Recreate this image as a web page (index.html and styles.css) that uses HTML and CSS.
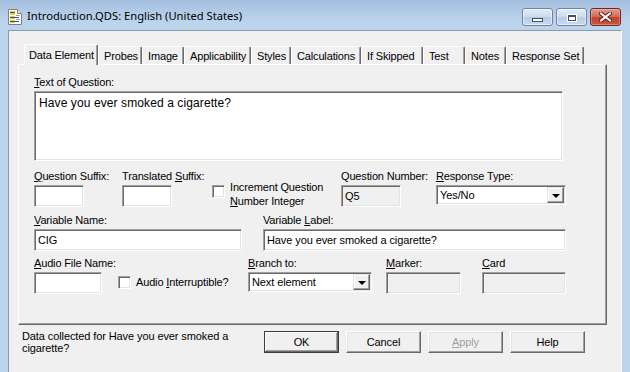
FILE: index.html
```html
<!DOCTYPE html>
<html lang="en">
<head>
    <meta charset="UTF-8">
    <title>Introduction.QDS: English (United States)</title>
    <link rel="stylesheet" href="styles.css">
</head>
<body>
    <div class="titlebar">
        <svg class="app-icon" width="14" height="16" viewBox="0 0 14 16">
            <path d="M0.5 0.5h9l4 4v11h-13z" fill="#fff" stroke="#808080"/>
            <path d="M9.5 0.5v4h4" fill="#e8e8e8" stroke="#808080"/>
            <rect x="2" y="2" width="5" height="4" fill="#f2cf1c"/>
            <rect x="2" y="3" width="5" height="1" fill="#2a4fb8"/>
            <rect x="2" y="7" width="5" height="3" fill="#f2cf1c"/>
            <rect x="2" y="8" width="9" height="1" fill="#2a4fb8"/>
            <rect x="2" y="11" width="5" height="3" fill="#f2cf1c"/>
            <rect x="2" y="12" width="9" height="1" fill="#2a4fb8"/>
            <rect x="8" y="6" width="4" height="1" fill="#9a9a9a"/>
            <rect x="8" y="10" width="4" height="1" fill="#9a9a9a"/>
        </svg>
        <span class="title">Introduction.QDS: English (United States)</span>
        <div class="caption-buttons">
            <div class="cap-btn"><span class="min-glyph"></span></div>
            <div class="cap-btn"><span class="max-glyph"></span></div>
            <div class="cap-btn close">
                <svg width="13" height="10" viewBox="0 0 13 10">
                    <path d="M2 1.5l9 7M11 1.5l-9 7" stroke="#5a1d14" stroke-width="4" stroke-linecap="square"/>
                    <path d="M2 1.5l9 7M11 1.5l-9 7" stroke="#fff" stroke-width="2" stroke-linecap="square"/>
                </svg>
            </div>
        </div>
    </div>

    <div class="client">
        <div class="tabs">
            <div class="tab active" style="width:74px">Data Element</div>
            <div class="tab" style="width:44px">Probes</div>
            <div class="tab" style="width:42px">Image</div>
            <div class="tab" style="width:67px">Applicability</div>
            <div class="tab" style="width:40px">Styles</div>
            <div class="tab" style="width:70px">Calculations</div>
            <div class="tab" style="width:62px">If Skipped</div>
            <div class="tab" style="width:42px">Test</div>
            <div class="tab" style="width:41px">Notes</div>
            <div class="tab" style="width:78px">Response Set</div>
        </div>

        <div class="panel">
            <label class="lbl"><u>T</u>ext of Question:</label>
            <div class="sunken question-text">Have you ever smoked a cigarette?</div>

            <div class="row">
                <div class="field w88">
                    <label class="lbl"><u>Q</u>uestion Suffix:</label>
                    <div class="sunken edit" style="width:50px"></div>
                </div>
                <div class="field w90">
                    <label class="lbl">Translated <u>S</u>uffix:</label>
                    <div class="sunken edit" style="width:50px"></div>
                </div>
                <div class="field w129 check-field">
                    <span class="sunken checkbox"></span>
                    <span class="check-text">Increment Question<br><u>N</u>umber Integer</span>
                </div>
                <div class="field w95">
                    <label class="lbl">Question Number:</label>
                    <div class="sunken edit disabled" style="width:60px">Q5</div>
                </div>
                <div class="field">
                    <label class="lbl"><u>R</u>esponse Type:</label>
                    <div class="sunken combo" style="width:130px">
                        <span class="combo-text">Yes/No</span>
                        <span class="combo-btn"><span class="arrow"></span></span>
                    </div>
                </div>
            </div>

            <div class="row">
                <div class="field w229">
                    <label class="lbl"><u>V</u>ariable Name:</label>
                    <div class="sunken edit" style="width:208px">CIG</div>
                </div>
                <div class="field">
                    <label class="lbl">Variable <u>L</u>abel:</label>
                    <div class="sunken edit" style="width:303px">Have you ever smoked a cigarette?</div>
                </div>
            </div>

            <div class="row">
                <div class="field w84">
                    <label class="lbl"><u>A</u>udio File Name:</label>
                    <div class="sunken edit" style="width:68px"></div>
                </div>
                <div class="field w130 check-field single">
                    <span class="sunken checkbox"></span>
                    <span class="check-text">Audio <u>I</u>nterruptible?</span>
                </div>
                <div class="field w138">
                    <label class="lbl"><u>B</u>ranch to:</label>
                    <div class="sunken combo" style="width:124px">
                        <span class="combo-text">Next element</span>
                        <span class="combo-btn"><span class="arrow"></span></span>
                    </div>
                </div>
                <div class="field w96">
                    <label class="lbl"><u>M</u>arker:</label>
                    <div class="sunken edit disabled" style="width:75px"></div>
                </div>
                <div class="field">
                    <label class="lbl"><u>C</u>ard</label>
                    <div class="sunken edit disabled" style="width:84px"></div>
                </div>
            </div>
        </div>

        <div class="footer">
            <div class="status">Data collected for Have you ever smoked a cigarette?</div>
            <div class="buttons">
                <button class="btn default">OK</button>
                <button class="btn">Cancel</button>
                <button class="btn disabled"><u>A</u>pply</button>
                <button class="btn">Help</button>
            </div>
        </div>
    </div>
</body>
</html>
```

FILE: styles.css
```css
body {
    margin: 0;
    width: 630px;
    height: 372px;
    overflow: hidden;
    background-color: #bcd3ec;
    font-family: "Liberation Sans", Arial, sans-serif;
    font-size: 11px;
    letter-spacing: -0.15px;
    color: #000;
}

/* title bar */

.titlebar {
    height: 30px;
    display: flex;
    align-items: flex-start;
    background: linear-gradient(#a3bfdf, #bcd3ec 70%);
}

.app-icon {
    margin: 9px 0 0 8px;
    flex-shrink: 0;
}

.title {
    margin: 8px 0 0 5px;
    font-family: "Noto Sans", sans-serif;
    font-size: 11.2px;
    letter-spacing: 0;
    line-height: 16px;
}

.caption-buttons {
    margin: 8px 9px 0 auto;
    display: flex;
    gap: 3px;
}

.cap-btn {
    width: 29px;
    height: 16px;
    border: 1px solid #6d84a2;
    border-radius: 3px;
    background: linear-gradient(#e3ecf6, #cbdbed 48%, #b7cbe3 52%, #c9daee);
    box-shadow: inset 0 0 0 1px rgba(255, 255, 255, 0.55);
    display: flex;
    align-items: center;
    justify-content: center;
}

.cap-btn.close {
    border-color: #6b2b22;
    background: linear-gradient(#e39c8e, #d26a55 48%, #c0432e 52%, #c9563f);
    box-shadow: inset 0 0 0 1px rgba(255, 200, 190, 0.4);
}

.min-glyph {
    width: 9px;
    height: 2px;
    margin-top: 5px;
    background-color: #fff;
    border: 1px solid #3e4e64;
}

.max-glyph {
    width: 6px;
    height: 3px;
    margin-top: 1px;
    border: 1px solid #3e4e64;
    border-top-width: 2px;
    background-color: #fff;
    box-shadow: 0 0 0 1px #fff;
}

/* client area */

.client {
    margin: 0 8px;
    height: 333px;
    background-color: #f0f0f0;
    border-top: 1px solid #8a9bb0;
    border-left: 1px solid #8a9bb0;
    border-right: 1px solid #ffffff;
    border-bottom: 1px solid #ffffff;
    padding-top: 13px;
}

.tabs {
    display: flex;
    align-items: flex-end;
    height: 20px;
    margin-left: 15px;
    position: relative;
    z-index: 1;
}

.tab {
    box-sizing: border-box;
    height: 18px;
    padding: 3px 0 0 5px;
    line-height: 13px;
    white-space: nowrap;
    border-top: 1px solid #fff;
    border-left: 1px solid #fff;
    border-right: 1px solid #696969;
    border-top-left-radius: 2px;
    border-top-right-radius: 2px;
    box-shadow: inset -1px 0 #a0a0a0;
}

.tab.active {
    height: 21px;
    margin-bottom: -1px;
    padding: 4px 0 0 4px;
    background-color: #f0f0f0;
}

.panel {
    box-sizing: border-box;
    margin-left: 9px;
    width: 589px;
    height: 261px;
    padding: 11px 0 0 15px;
    border-top: 1px solid #fff;
    border-left: 1px solid #fff;
    border-right: 1px solid #696969;
    border-bottom: 1px solid #696969;
    box-shadow: inset -1px -1px #a0a0a0;
}

.lbl {
    display: block;
    height: 13px;
    line-height: 13px;
    margin-bottom: 2px;
    white-space: nowrap;
}

.sunken {
    box-sizing: border-box;
    border: 1px solid;
    border-color: #a0a0a0 #fff #fff #a0a0a0;
    box-shadow: inset 1px 1px #696969, inset -1px -1px #e3e3e3;
    background-color: #fff;
}

.question-text {
    width: 529px;
    height: 70px;
    padding: 4px 4px;
    font-size: 12px;
    letter-spacing: 0.1px;
}

.row {
    display: flex;
    margin-top: 9px;
}

.row + .row {
    margin-top: 6px;
}

.field {
    flex-shrink: 0;
}

.w84 { width: 84px; }
.w88 { width: 88px; }
.w90 { width: 90px; }
.w95 { width: 95px; }
.w96 { width: 96px; }
.w129 { width: 129px; }
.w130 { width: 130px; }
.w138 { width: 138px; }
.w229 { width: 229px; }

.edit {
    height: 22px;
    padding: 3px 3px 0;
    line-height: 14px;
    letter-spacing: -0.1px;
}

.edit.disabled {
    background-color: #f0f0f0;
}

.combo {
    height: 20px;
    display: flex;
    align-items: center;
    padding: 0 1px 0 3px;
}

.combo-text {
    flex: 1;
    letter-spacing: -0.1px;
}

.combo-btn {
    box-sizing: border-box;
    width: 17px;
    height: 16px;
    border: 1px solid;
    border-color: #e3e3e3 #696969 #696969 #e3e3e3;
    box-shadow: inset -1px -1px #a0a0a0, inset 1px 1px #fff;
    background-color: #f0f0f0;
    display: flex;
    align-items: center;
    justify-content: center;
}

.arrow {
    width: 0;
    height: 0;
    margin-top: 1px;
    border-left: 4px solid transparent;
    border-right: 4px solid transparent;
    border-top: 4px solid #000;
}

.check-field {
    display: flex;
    align-items: flex-start;
    padding-top: 10px;
}

.check-field.single {
    padding-top: 19px;
}

.checkbox {
    width: 13px;
    height: 13px;
    margin-top: 5px;
    flex-shrink: 0;
}

.check-field.single .checkbox {
    margin-top: 0;
}

.check-text {
    margin-left: 5px;
    line-height: 14px;
    white-space: nowrap;
}

.check-field.single .check-text {
    line-height: 13px;
}

/* footer with status and buttons */

.footer {
    display: flex;
    padding: 5px 0 0 13px;
}

.status {
    width: 215px;
    margin-right: 27px;
    line-height: 12px;
    letter-spacing: -0.1px;
}

.buttons {
    display: flex;
    gap: 7px;
    margin-top: 1px;
}

.btn {
    box-sizing: border-box;
    width: 75px;
    height: 22px;
    padding: 0;
    font-family: "Liberation Sans", Arial, sans-serif;
    font-size: 11px;
    letter-spacing: -0.1px;
    color: #000;
    background-color: #f0f0f0;
    border: 1px solid;
    border-color: #fff #696969 #696969 #fff;
    box-shadow: inset -1px -1px #a0a0a0, inset 1px 1px #e3e3e3;
}

.btn u {
    text-decoration: underline;
}

.btn.default {
    border-color: #3c3c3c;
    box-shadow: inset -1px -1px #696969, inset 1px 1px #fff, inset -2px -2px #a0a0a0;
}

.btn.disabled {
    color: #a0a0a0;
}
```
